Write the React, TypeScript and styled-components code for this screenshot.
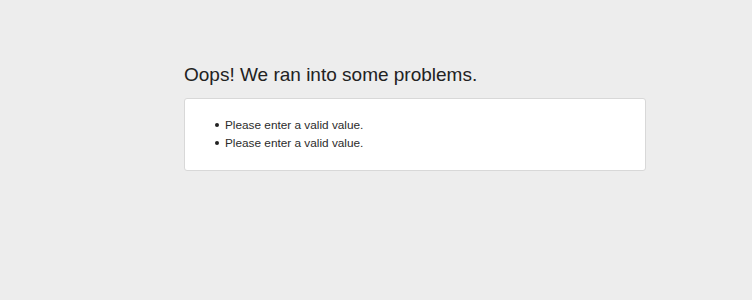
import React from 'react';
import styled, { createGlobalStyle } from 'styled-components';

const GlobalStyle = createGlobalStyle`
  html, body {
    margin: 0;
    padding: 0;
    background: #ededed;
  }
  body {
    font-family: "Liberation Sans", Arial, sans-serif;
    color: #333;
  }
`;

const Page = styled.div`
  min-height: 300px;
  box-sizing: border-box;
  padding: 64px 0 0 184px;
`;

const Container = styled.div`
  width: 462px;
`;

const Heading = styled.h1`
  margin: 0 0 12px;
  font-size: 19px;
  line-height: 22px;
  font-weight: 400;
  color: #222;
`;

const Panel = styled.div`
  background: #fff;
  border: 1px solid #d8d8d8;
  border-radius: 3px;
  padding: 17px 15px 18px;
`;

const ErrorList = styled.ul`
  margin: 0;
  padding-left: 15px;
  list-style: none;
  font-size: 11.8px;
  line-height: 18px;
  color: #2b2b2b;
`;

const ErrorItem = styled.li`
  display: flex;
  align-items: center;
`;

const Bullet = styled.span`
  width: 4px;
  height: 4px;
  border-radius: 50%;
  background: #222;
  margin-right: 6px;
  flex: none;
`;

const errors = ['Please enter a valid value.', 'Please enter a valid value.'];

const App: React.FC = () => {
  return (
    <>
      <GlobalStyle />
      <Page>
        <Container>
          <Heading>Oops! We ran into some problems.</Heading>
          <Panel>
            <ErrorList>
              {errors.map((msg, i) => (
                <ErrorItem key={i}>
                  <Bullet />
                  {msg}
                </ErrorItem>
              ))}
            </ErrorList>
          </Panel>
        </Container>
      </Page>
    </>
  );
};

export default App;
